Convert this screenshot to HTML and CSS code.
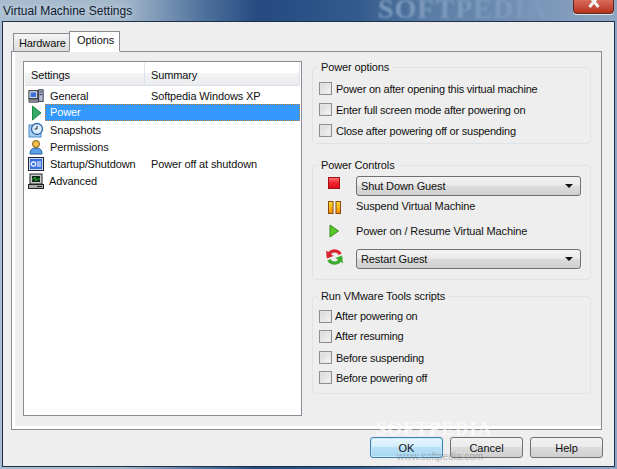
FILE: index.html
```html
<!DOCTYPE html>
<html>
<head>
<meta charset="utf-8">
<title>Virtual Machine Settings</title>
<link rel="stylesheet" href="styles.css">
</head>
<body>
<div class="window">
  <div class="titlebar">
    <span class="title">Virtual Machine Settings</span>
    <span class="wm-top">SOFTPEDIA</span>
    <span class="close"><svg width="16" height="10" viewBox="0 0 16 10"><path d="M3.500 -3 L12.500 8 M12.500 -3 L3.500 8" stroke="#f4f4f4" stroke-width="3" fill="none"/></svg></span>
  </div>
  <div class="dialog">
    <div class="tabs">
      <div class="tab">Hardware</div>
      <div class="tab active">Options</div>
    </div>
    <div class="panel">
      <div class="list">
        <div class="head"><div class="hc c1">Settings</div><div class="hc c2">Summary</div></div>
        <div class="row"><span class="ic"><svg width="16" height="16" viewBox="0 0 18 16"><rect x="1" y="2" width="10" height="9" fill="#c8d4e8" stroke="#222"/><rect x="3" y="4" width="6" height="5" fill="#3a6fd8"/><rect x="1" y="12" width="11" height="3" fill="#889" stroke="#222" stroke-width=".6"/><rect x="12" y="1" width="5" height="13" fill="#b8c0d8" stroke="#223"/><rect x="13" y="3" width="3" height="1" fill="#224"/><rect x="13" y="6" width="3" height="1" fill="#224"/></svg></span><span class="cell n">General</span><span class="cell">Softpedia Windows XP</span></div>
        <div class="row sel"><span class="ic"><svg width="14" height="16" viewBox="0 0 14 16"><path d="M3.500 1 L12 8 L3.500 15 Z" fill="#35a86a" stroke="#1d8c3f"/></svg></span><span class="cell n hl">Power</span></div>
        <div class="row"><span class="ic"><svg width="16" height="16" viewBox="0 0 16 16"><rect x="1" y="3" width="12" height="12" fill="#a8cdf0" stroke="#4d8ac8"/><circle cx="9" cy="7" r="5.500" fill="#dcecfa" stroke="#2c64a8" stroke-width="1.300"/><path d="M9 4 V7 H6.500" stroke="#234" fill="none"/></svg></span><span class="cell n">Snapshots</span></div>
        <div class="row"><span class="ic"><svg width="14" height="16" viewBox="0 0 14 16"><path d="M1 15 C1 10 4 9 7 9 C10 9 13 10 13 15 Z" fill="#5aa0e8" stroke="#2c5c98"/><circle cx="7" cy="5" r="3.500" fill="#f0c048" stroke="#7a5a10"/></svg></span><span class="cell n">Permissions</span></div>
        <div class="row"><span class="ic"><svg width="16" height="16" viewBox="0 0 16 16"><rect x=".5" y="1.500" width="15" height="13" fill="#c8d8f0" stroke="#223"/><rect x="2" y="3" width="12" height="10" fill="#3a72e0"/><circle cx="5.500" cy="8" r="2.200" fill="none" stroke="#fff" stroke-width="1.200"/><path d="M9 6 H13 M9 8 H13 M9 10 H13" stroke="#fff"/></svg></span><span class="cell n">Startup/Shutdown</span><span class="cell">Power off at shutdown</span></div>
        <div class="row"><span class="ic"><svg width="16" height="16" viewBox="0 0 16 16"><rect x="2" y="1" width="12" height="10" fill="#ccc" stroke="#222"/><rect x="4" y="3" width="8" height="6" fill="#102818"/><path d="M4 6 H6 L7 4 L8 8 L9 6 H12" stroke="#3c3" fill="none" stroke-width=".8"/><rect x=".5" y="11.500" width="15" height="4" fill="#aaa" stroke="#222"/><rect x="9" y="13" width="5" height="1" fill="#222"/></svg></span><span class="cell n adv">Advanced</span></div>
      </div>
      <div class="side">
        <fieldset class="grp g1">
          <legend>Power options</legend>
          <label class="chk"><i class="box"></i>Power on after opening this virtual machine</label>
          <label class="chk"><i class="box"></i>Enter full screen mode after powering on</label>
          <label class="chk"><i class="box"></i>Close after powering off or suspending</label>
        </fieldset>
        <fieldset class="grp g2">
          <legend>Power Controls</legend>
          <div class="ctl r1"><span class="cic"><svg width="12" height="12" viewBox="0 0 12 12"><defs><linearGradient id="gs" x1="0" y1="0" x2="0" y2="1"><stop offset="0" stop-color="#ff7a7a"/><stop offset=".5" stop-color="#f02028"/><stop offset="1" stop-color="#d81018"/></linearGradient></defs><rect x=".5" y=".5" width="11" height="11" fill="url(#gs)" stroke="#a01018"/></svg></span><div class="select">Shut Down Guest<b class="arrow"></b></div></div>
          <div class="ctl r2"><span class="cic"><svg width="13" height="13" viewBox="0 0 13 13"><defs><linearGradient id="gp" x1="0" y1="0" x2="0" y2="1"><stop offset="0" stop-color="#ffe030"/><stop offset="1" stop-color="#f58a08"/></linearGradient></defs><rect x=".5" y=".5" width="4.500" height="12" fill="url(#gp)" stroke="#8a4a10"/><rect x="8" y=".5" width="4.500" height="12" fill="url(#gp)" stroke="#8a4a10"/></svg></span><span class="ctext">Suspend Virtual Machine</span></div>
          <div class="ctl r3"><span class="cic"><svg width="12" height="16" viewBox="0 0 12 16"><path d="M2 2 L10.500 8 L2 14 Z" fill="#5ac828" stroke="#2c8c1c"/></svg></span><span class="ctext">Power on / Resume Virtual Machine</span></div>
          <div class="ctl r4"><span class="cic"><svg width="17" height="16" viewBox="0 0 18 16"><path d="M2.500 7.500 A6.500 5.500 0 0 1 15 5" stroke="#d8242c" stroke-width="3.600" fill="none"/><path d="M0 1 L1 9.500 L8 7 Z" fill="#d8242c"/><path d="M15.500 8.500 A6.500 5.500 0 0 1 3 11" stroke="#3cac30" stroke-width="3.600" fill="none"/><path d="M18 15 L17 6.500 L10 9 Z" fill="#3cac30"/></svg></span><div class="select">Restart Guest<b class="arrow"></b></div></div>
        </fieldset>
        <fieldset class="grp g3">
          <legend>Run VMware Tools scripts</legend>
          <label class="chk s1"><i class="box"></i>After powering on</label>
          <label class="chk s2"><i class="box"></i>After resuming</label>
          <label class="chk s3"><i class="box"></i>Before suspending</label>
          <label class="chk s4"><i class="box"></i>Before powering off</label>
        </fieldset>
      </div>
    </div>
    <div class="actions">
      <button class="btn def">OK</button>
      <button class="btn">Cancel</button>
      <button class="btn">Help</button>
    </div>
    <div class="wm-bottom"><span class="wm1">SOFTPEDIA</span><span class="wm2">www.softpedia.com</span></div>
  </div>
</div>
</body>
</html>
```
FILE: styles.css
```css
* { box-sizing: border-box; }
html, body { margin: 0; padding: 0; }
body { width: 617px; height: 469px; overflow: hidden; font-family: "Liberation Sans", sans-serif; font-size: 11px; letter-spacing: -.12px; color: #111; background: #3f6ea8; }
.window { width: 617px; height: 469px; display: flex; flex-direction: column; background: linear-gradient(90deg, #a9bdd0 0, #a3b7cb 20%, #4f719c 33%, #244a80 42%, #335b8d 58%, #5a7ca5 70%, #7f99ba 90%, #8fa6c2 100%); position: relative; }
.titlebar { height: 21px; display: flex; align-items: center; padding-left: 3px; position: relative; overflow: hidden; flex: none; }
.title { font-size: 12px; letter-spacing: 0; color: #10202f; text-shadow: 0 0 6px #dfe9f2; }
.wm-top { position: absolute; left: 378px; top: -7px; font-family: "Liberation Serif", serif; font-size: 28px; font-weight: bold; letter-spacing: 1px; color: #7e9bbd; filter: blur(.9px); }
.close { position: absolute; left: 573px; top: -2px; width: 41px; height: 16px; border: 1px solid #5b2a24; border-radius: 0 0 4px 4px; background: linear-gradient(#d9705e, #b8321e); box-shadow: 0 1px 0 #dfe6ee; display: flex; align-items: flex-start; justify-content: center; overflow: hidden; }
.dialog { position: relative; margin: 0 2px 2px 2px; flex: 1; background: #eeeeee; border: 1px solid #1e3048; padding: 9px 12px 0 8px; display: flex; flex-direction: column; }
.tabs { display: flex; height: 21px; flex: none; padding-left: 2px; align-items: flex-end; margin-bottom: -1px; position: relative; z-index: 1; }
.tab { height: 19px; width: 56px; padding: 3px 0 0 5px; border: 1px solid #8b8b95; background: linear-gradient(#f4f4f4, #dcdcdc); border-right: 0; }
.tab.active { height: 21px; width: 51px; background: #fff; border-right: 1px solid #8b8b95; border-bottom-color: #fff; padding: 2px 0 0 7px; }
.panel { height: 379px; flex: none; background: #eeeeee; border: 1px solid #8b8b95; box-shadow: inset 3px 0 0 #fff, inset 0 -3px 0 #fff; padding: 9px 10px 13px 11px; display: flex; gap: 10px; }
.list { width: 279px; background: #fff; border: 1px solid #8b8b95; padding: 1px 1px 0 1px; }
.head { display: flex; height: 23px; margin-bottom: 1px; background: linear-gradient(#fff 0, #fff 45%, #f2f3f4 46%, #eaecee 100%); border-bottom: 1px solid #dde0e4; }
.hc { padding: 6px 0 0 6px; border-right: 1px solid #dfe2e6; }
.c1 { width: 120px; }
.c2 { flex: 1; }
.row { height: 17px; display: flex; align-items: center; position: relative; }
.ic { width: 18px; flex: none; display: flex; justify-content: center; margin-left: 2px; }
.cell { white-space: nowrap; }
.n { width: 106px; padding-left: 5px; flex: none; }
.hl { flex: 1; height: 17px; background: #3399ff; color: #fff; line-height: 17px; outline: 1px dotted #c08040; outline-offset: -1px; }
.adv { padding-left: 4px; }
.side { width: 279px; display: flex; flex-direction: column; }
.grp { margin: 0; padding: 0 6px; border: 1px solid #dce4ea; border-radius: 4px; min-width: 0; width: 279px; }
.grp legend { padding: 0 3px; margin-left: -1px; line-height: 13px; }
.g1 { height: 83px; padding-top: 4px; }
.g2 { height: 121px; margin-top: 15px; }
.g3 { height: 104px; margin-top: 10px; }
.chk { display: flex; align-items: center; height: 21px; gap: 4px; letter-spacing: -.22px; }
.box { width: 13px; height: 13px; flex: none; border: 1px solid #8e8f8f; background: linear-gradient(135deg, #d6d6d6, #f6f6f6); box-shadow: inset 0 0 0 1px #e4e4e4; }
.s1 { height: 20px; margin-top: 3px; gap: 3px; }
.s2 { height: 20px; gap: 3px; }
.s3 { height: 23px; }
.s4 { height: 17px; }
.ctl { display: flex; align-items: center; }
.cic { width: 37px; padding-left: 9px; flex: none; display: flex; }
.r1 { height: 20px; margin-top: 4px; }
.r1 .cic { margin-bottom: 6px; }
.r2 { height: 20px; margin-top: 0; }
.r2 .cic { margin-top: 2px; }
.r3 { height: 20px; margin-top: 5px; }
.r4 { height: 20px; margin-top: 8px; }
.r4 .cic { padding-left: 7px; margin-bottom: 4px; }
.select { width: 225px; height: 20px; border: 1px solid #707070; border-radius: 3px; background: linear-gradient(#f2f2f2 0, #ebebeb 45%, #dcdcdc 50%, #cfcfcf 100%); padding-left: 4px; line-height: 18px; position: relative; }
.arrow { position: absolute; right: 7px; top: 7px; width: 0; height: 0; border-left: 4px solid transparent; border-right: 4px solid transparent; border-top: 4px solid #111; }
.actions { display: flex; justify-content: flex-end; gap: 7px; margin: 7px -1px 0 0; }
.btn { width: 73px; height: 21px; font: inherit; letter-spacing: 0; color: #111; border: 1px solid #707070; border-radius: 3px; background: linear-gradient(#f2f2f2 0, #ebebeb 45%, #dcdcdc 50%, #cfcfcf 100%); padding: 0; }
.def { border-color: #3c7fb1; background: linear-gradient(#e8f6fd 0, #d4edfb 45%, #b8e0f6 50%, #a7d8f3 100%); box-shadow: inset 0 0 0 1px #c8ecfc; }
.wm-bottom { position: absolute; left: 373px; top: 398px; width: 180px; display: flex; flex-direction: column; pointer-events: none; }
.wm1 { font-family: "Liberation Serif", serif; font-weight: bold; font-size: 18px; letter-spacing: 1.500px; color: rgba(255,255,255,.7); line-height: 18px; }
.wm2 { font-size: 10px; letter-spacing: 0; line-height: 12px; margin-top: 13px; margin-left: 21px; color: rgba(120,120,120,.5); }
```
